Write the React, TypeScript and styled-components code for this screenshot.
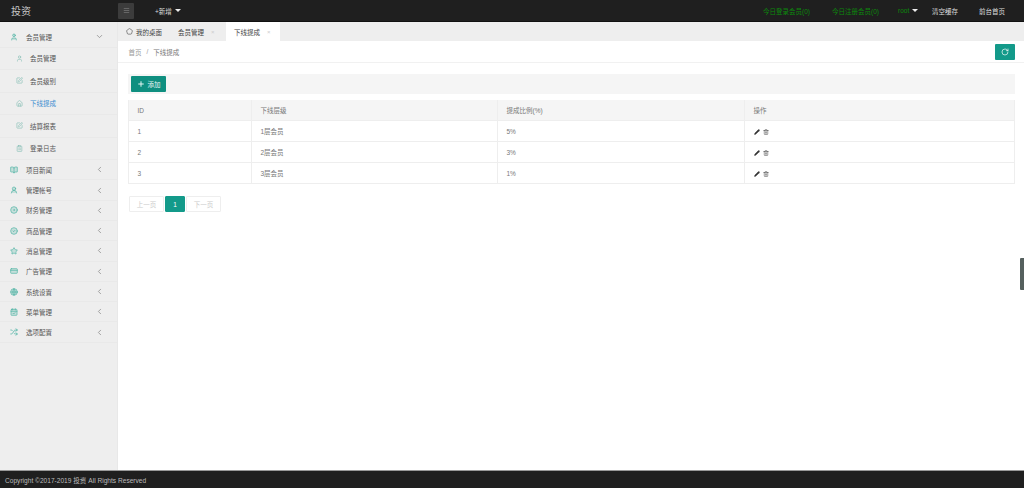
import React from "react";
import styled, { createGlobalStyle } from "styled-components";
import {
  User, UserRound, SquarePen, House, ChevronDown, ChevronLeft, BookOpen, CircleCheck, Star, CreditCard,
  Globe, CalendarCheck, Shuffle, CircleDot, Pencil, Trash2, RotateCw, Plus, Menu, ClipboardList, Pentagon, type LucideIcon,
} from "lucide-react";

const Global = createGlobalStyle`
  html, body { margin: 0; padding: 0; background: #fff; }
  body { font-family: "Liberation Sans", "Noto Sans CJK SC", sans-serif; font-size: 6.5px; color: #676a6c; }
  * { box-sizing: border-box; }
`;
const Page = styled.div`
  width: 1024px; height: 488px; display: flex; flex-direction: column; position: relative; overflow: hidden;
`;
const Header = styled.header`
  height: 22px; flex: none; background: #1f1f1f; display: flex; align-items: center; border-bottom: 1px solid #111;
`;
const Brand = styled.div`
  width: 118px; padding-left: 11px; color: #c8c8c8; font-size: 10px; flex: none;
`;
const MenuButton = styled.div`
  width: 16px; height: 16px; background: #3c3c3c; border-radius: 1px; display: flex; align-items: center; justify-content: center; color: #888;
`;
const AddMenu = styled.div`
  margin-left: 21px; color: #ddd; font-size: 6.5px; display: flex; align-items: center; gap: 3px;
`;
const Caret = styled.span`
  width: 0; height: 0; border-left: 3px solid transparent; border-right: 3px solid transparent; border-top: 3px solid #eee;
`;
const HeaderRight = styled.div`
  margin-left: auto; display: flex; align-items: center; font-size: 6.5px; padding-right: 20px;
`;
const Stat = styled.span<{ $w: number }>`
  color: #0c8a0c; width: ${(p) => p.$w}px; display: flex; align-items: center; gap: 3px; white-space: nowrap;
`;
const HeaderLink = styled.span<{ $w: number }>`
  color: #ddd; width: ${(p) => p.$w}px; white-space: nowrap;
`;
const Body = styled.div`
  flex: 1; display: flex; min-height: 0;
`;
const Sidebar = styled.aside`
  width: 118px; flex: none; background: #eee; padding-top: 5.3px; border-right: 1px solid #e8e8e8;
`;
const ParentRow = styled.div`
  height: 20.3px; display: flex; align-items: center; padding-left: 10px; border-bottom: 1px solid #e9e9e9; color: #555;
  & > svg:first-child { color: #4fb3a5; fill: rgba(79, 179, 165, 0.25); flex: none; }
`;
const ParentLabel = styled.span`
  margin-left: 8px; flex: 1;
`;
const ChevronSlot = styled.span`
  width: 22px; flex: none; color: #888; display: flex;
`;
const ChildRow = styled.div<{ $active?: boolean }>`
  height: 22.5px; display: flex; align-items: center; padding-left: 16px; border-bottom: 1px solid #e9e9e9;
  color: ${(p) => (p.$active ? "#3c8dd0" : "#555")};
  & > svg { color: #7fbcb2; margin-right: 7px; flex: none; }
`;
const Main = styled.main`
  flex: 1; min-width: 0; display: flex; flex-direction: column; background: #fff;
`;
const Tabs = styled.nav`
  height: 19px; background: #eee; display: flex; flex: none;
`;
const Tab = styled.div<{ $active?: boolean; $w: number }>`
  width: ${(p) => p.$w}px; display: flex; align-items: center; padding-left: 8px; gap: 3px; white-space: nowrap; color: #444;
  background: ${(p) => (p.$active ? "#fff" : "transparent")};
`;
const TabClose = styled.span`
  margin-left: 4px; color: #ccc; font-size: 6px;
`;
const BreadcrumbBar = styled.div`
  height: 22px; flex: none; display: flex; align-items: center; padding: 0 9px 0 10.5px; border-bottom: 1px solid #f1f1f1; color: #999;
`;
const Slash = styled.span`
  margin: 0 5px;
`;
const Current = styled.span`
  color: #777;
`;
const RefreshButton = styled.div`
  margin-left: auto; width: 20px; height: 16px; background: #139a8a; border-radius: 1px; display: flex; align-items: center; justify-content: center; color: #fff;
`;
const Content = styled.div`
  padding: 11px 9px 0 10px;
`;
const Toolbar = styled.div`
  height: 20px; background: #f5f5f5; padding-left: 3px; display: flex; align-items: center; margin-bottom: 6px;
`;
const AddButton = styled.div`
  width: 35px; height: 16px; background: #0f8f80; color: #e6f5f3; border-radius: 1px; display: flex; align-items: center; justify-content: center; gap: 3px;
`;
const Table = styled.table`
  width: 887px; border-collapse: separate; border-spacing: 0; table-layout: fixed; border-left: 1px solid #eee;
`;
const Th = styled.th<{ $w?: number }>`
  height: 21px; padding: 0 0 0 8.5px; background: #f5f5f5; font-weight: 400; text-align: left; color: #777;
  border-right: 1px solid #eee; border-bottom: 1px solid #eee;
  ${(p) => (p.$w ? `width: ${p.$w}px;` : "")}
`;
const Td = styled.td`
  height: 21px; padding: 0 0 0 8.5px; color: #777; border-right: 1px solid #eee; border-bottom: 1px solid #eee;
`;
const Actions = styled.span`
  display: inline-flex; gap: 3px; align-items: center; color: #444; vertical-align: middle;
`;
const Pager = styled.div`
  margin: 12px 0 0 1px; display: flex; height: 16px; gap: 1px;
`;
const PageItem = styled.div<{ $active?: boolean; $w: number }>`
  width: ${(p) => p.$w}px; display: flex; align-items: center; justify-content: center; border-radius: 1px;
  border: 1px solid ${(p) => (p.$active ? "#139a8a" : "#eee")};
  background: ${(p) => (p.$active ? "#139a8a" : "#fff")}; color: ${(p) => (p.$active ? "#fff" : "#ccc")};
`;
const Footer = styled.footer`
  height: 18px; flex: none; background: #1f1f1f; border-top: 1px solid #999; color: #bbb; display: flex; align-items: center; padding-left: 5px; font-size: 6.6px;
`;
const SideHandle = styled.div`
  position: absolute; right: 0; top: 258px; width: 4px; height: 32px; background: #55605e; border-radius: 1px 0 0 1px;
`;

const parents: [string, LucideIcon][] = [
  ["项目新闻", BookOpen], ["管理帐号", UserRound], ["财务管理", CircleDot], ["商品管理", CircleCheck], ["消息管理", Star],
  ["广告管理", CreditCard], ["系统设置", Globe], ["菜单管理", CalendarCheck], ["选项配置", Shuffle],
];
const children: [string, LucideIcon, boolean?][] = [
  ["会员管理", User], ["会员级别", SquarePen], ["下线提成", House, true], ["结算报表", SquarePen], ["登录日志", ClipboardList],
];
const rows = [["1", "1层会员", "5%"], ["2", "2层会员", "3%"], ["3", "3层会员", "1%"]];

export default function App() {
  return (
    <Page>
      <Global />
      <Header>
        <Brand>投资</Brand>
        <MenuButton><Menu size={7} /></MenuButton>
        <AddMenu>+新增 <Caret /></AddMenu>
        <HeaderRight>
          <Stat $w={69}>今日登录会员(0)</Stat>
          <Stat $w={66}>今日注册会员(0)</Stat>
          <Stat $w={34}>root <Caret /></Stat>
          <HeaderLink $w={47}>清空缓存</HeaderLink>
          <HeaderLink $w={25}>前台首页</HeaderLink>
        </HeaderRight>
      </Header>
      <Body>
        <Sidebar>
          <ParentRow>
            <User size={8} /><ParentLabel>会员管理</ParentLabel>
            <ChevronSlot><ChevronDown size={9} /></ChevronSlot>
          </ParentRow>
          {children.map(([label, Icon, active]) => (
            <ChildRow key={label} $active={active}><Icon size={7} />{label}</ChildRow>
          ))}
          {parents.map(([label, Icon]) => (
            <ParentRow key={label}>
              <Icon size={8} /><ParentLabel>{label}</ParentLabel>
              <ChevronSlot><ChevronLeft size={9} /></ChevronSlot>
            </ParentRow>
          ))}
        </Sidebar>
        <Main>
          <Tabs>
            <Tab $w={52}><Pentagon size={7} /> 我的桌面</Tab>
            <Tab $w={56}>会员管理<TabClose>×</TabClose></Tab>
            <Tab $active $w={54}>下线提成<TabClose>×</TabClose></Tab>
          </Tabs>
          <BreadcrumbBar>
            首页<Slash>/</Slash><Current>下线提成</Current>
            <RefreshButton><RotateCw size={8} /></RefreshButton>
          </BreadcrumbBar>
          <Content>
            <Toolbar>
              <AddButton><Plus size={8} strokeWidth={3} />添加</AddButton>
            </Toolbar>
            <Table>
              <thead>
                <tr>
                  <Th $w={123}>ID</Th><Th $w={246}>下线层级</Th><Th $w={247}>提成比例(%)</Th><Th>操作</Th>
                </tr>
              </thead>
              <tbody>
                {rows.map(([id, level, pct]) => (
                  <tr key={id}>
                    <Td>{id}</Td><Td>{level}</Td><Td>{pct}</Td>
                    <Td><Actions><Pencil size={6} fill="#333" /><Trash2 size={6} /></Actions></Td>
                  </tr>
                ))}
              </tbody>
            </Table>
            <Pager>
              <PageItem $w={35}>上一页</PageItem>
              <PageItem $active $w={20}>1</PageItem>
              <PageItem $w={35}>下一页</PageItem>
            </Pager>
          </Content>
        </Main>
      </Body>
      <Footer>Copyright ©2017-2019 投资 All Rights Reserved</Footer>
      <SideHandle />
    </Page>
  );
}
